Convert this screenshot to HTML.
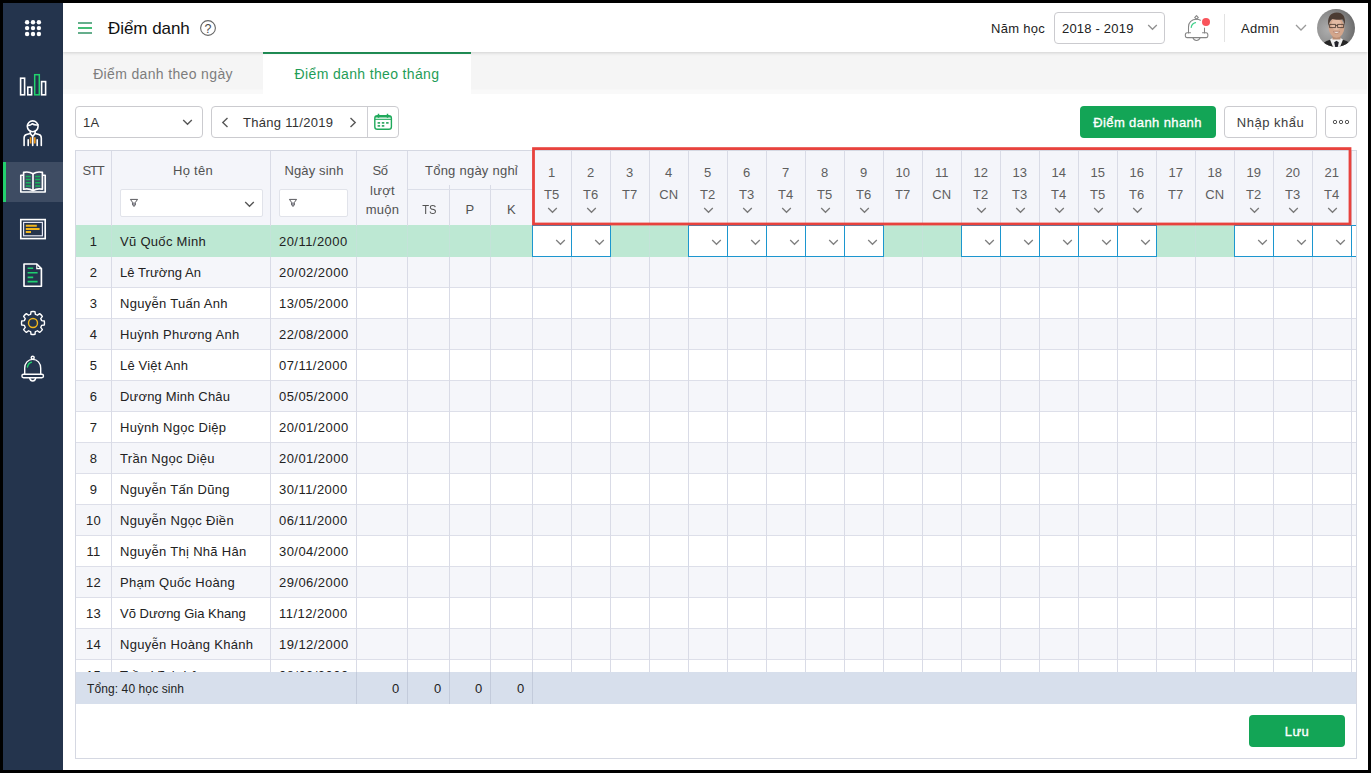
<!DOCTYPE html>
<html lang="vi">
<head>
<meta charset="utf-8">
<title>Điểm danh</title>
<style>
*{box-sizing:border-box;margin:0;padding:0}
html,body{width:1371px;height:773px;overflow:hidden;background:#000}
body{font-family:"Liberation Sans",sans-serif;font-size:13px;color:#222;position:relative}
.abs{position:absolute}
#bg{position:absolute;left:3px;top:3px;width:1365px;height:767px;background:#fff}
#side{position:absolute;left:3px;top:3px;width:60px;height:767px;background:#24344d}
#side .act{position:absolute;left:0;top:159px;width:60px;height:40px;background:#3e4c63}
#side .act i{position:absolute;left:0;top:0;width:3px;height:40px;background:#23d16e}
#side svg{position:absolute}
#head{position:absolute;left:63px;top:3px;width:1305px;height:49px;background:#fff;z-index:3;box-shadow:0 1px 3px rgba(0,0,0,.15)}
#tabs{position:absolute;left:63px;top:52px;width:1304px;height:42px;background:linear-gradient(#f5f5f5 0,#f5f5f5 37px,#f9f9f9 38px,#f9f9f9 42px)}
#tabs .t{position:absolute;top:0;height:42px;font-size:14px;line-height:45px;text-align:center;color:#7d7d7d;white-space:nowrap;letter-spacing:.35px}
#tabs .t.on{background:#fff;color:#1f9d57;border-top:2px solid #22955a;line-height:41px}
.tx{position:absolute;white-space:nowrap;line-height:16px}
.box{position:absolute;border:1px solid #cbcbcf;border-radius:4px;background:#fff}
.btn{position:absolute;border-radius:4px;text-align:center;white-space:nowrap}
.btn.g{background:#13a556;color:#fff;-webkit-text-stroke:.32px #fff}
.btn.w{background:#fff;border:1px solid #cbcbcf;color:#3c3c3c}
#grid{position:absolute;left:0;top:0;width:1356px;height:704px;overflow:hidden}
#ghead{position:absolute;left:76px;top:151px;width:1281px;height:75px;background:#f4f5fa;border-bottom:1px solid #dcdfe9}
.vl{position:absolute;width:1px;background:#d9dbe6}
.hl{position:absolute;height:1px;background:#dcdfe9}
.hc{position:absolute;text-align:center;color:#525252;white-space:nowrap;line-height:16px;letter-spacing:.3px}
.fbox{position:absolute;background:#fff;border:1px solid #e1e3ea;border-radius:2px}
.row{position:absolute;left:76px;width:1281px;height:31px;border-bottom:1px solid #dddfe9;letter-spacing:.3px}
.row.ev{background:#f5f6fa}
.row.sel{background:#bde8d3;height:32px;border-bottom:none;padding-top:1px}
.row.sel span{top:1px}
.row span{position:absolute;top:0;line-height:31px;white-space:nowrap}
.row .n{left:0;width:35px;text-align:center}
.row .nm{left:44px}
.row .d{left:203px;letter-spacing:.45px}
.cell{position:absolute;height:32px;background:#fff;border:1px solid #1c96cf}
#gfoot{position:absolute;left:76px;top:672px;width:1280px;height:32px;background:#d7dfec;letter-spacing:.3px}
#gfoot span{position:absolute;top:0;line-height:33px;white-space:nowrap}
#gfoot .z{text-align:right;padding-right:8.500px}
#gfoot .t{font-size:12px;letter-spacing:.1px;left:11px;top:1px}
#gfoot i{position:absolute;top:0;width:1px;height:32px;background:#c3cbdb}
#panel{position:absolute;left:75px;top:150px;width:1282px;height:609px;border:1px solid #d5d8e2;pointer-events:none}
#red{position:absolute;left:532px;top:147px;width:820px;height:79px;border:3px solid #e8413c}
.dn{letter-spacing:0;padding-left:.4px;color:#5e5e5e}
.vs{position:absolute;top:226px;width:1px;height:31px;background:#c4e3d9}
</style>
</head>
<body>
<div id="bg"></div>
<div id="side">
  <div class="act"><i></i></div>
</div>
<svg class="abs" style="left:3px;top:3px" width="60" height="400" viewBox="3 3 60 400">
<g fill="#fff"><circle cx="27.100" cy="22.200" r="2.200"/><circle cx="33" cy="22.200" r="2.200"/><circle cx="38.900" cy="22.200" r="2.200"/><circle cx="27.100" cy="28.100" r="2.200"/><circle cx="33" cy="28.100" r="2.200"/><circle cx="38.900" cy="28.100" r="2.200"/><circle cx="27.100" cy="34" r="2.200"/><circle cx="33" cy="34" r="2.200"/><circle cx="38.900" cy="34" r="2.200"/></g>
<!-- bar chart -->
<g fill="none" stroke="#fff" stroke-width="1.600"><rect x="20.600" y="78.200" width="4" height="16.600"/><rect x="27.800" y="87.200" width="3.800" height="7.600"/><rect x="41.600" y="81.600" width="4" height="13.200"/></g>
<rect x="34.700" y="74.700" width="4.600" height="20.100" fill="none" stroke="#23d16e" stroke-width="1.500"/>
<!-- person -->
<g fill="none" stroke="#fff" stroke-width="1.600" stroke-linejoin="round" stroke-linecap="round">
<circle cx="32.700" cy="126.300" r="5.400"/>
<path d="M27.600 125.200c2 .4 3.600-.2 4.600-1.400 1.600 1 3.600 1.400 5.800 1"/>
<path d="M30.300 131.200v2.200l-3.800 1.200c-1.600.5-2.400 1.800-2.400 3.400v7.400M35.100 131.200v2.200l3.800 1.200c1.600.5 2.400 1.800 2.400 3.400v7.400"/>
<path d="M30.300 133.400l2.400 3 2.400-3M28.200 145.400v-5.600M37.200 145.400v-5.600M32.700 136.400v9"/>
</g>
<path d="M30.600 137.200v6.400M34.800 137.200v6.400" stroke="#f39a1d" stroke-width="1.650" fill="none"/>
<!-- book -->
<g fill="none" stroke="#fff" stroke-width="1.650" stroke-linejoin="round">
<path d="M23.600 172.400c3.400-.8 6.600-.4 9.400 1.400 2.800-1.800 6-2.200 9.400-1.400v16.800c-3.400-.8-6.600-.4-9.400 1.400-2.800-1.800-6-2.200-9.400-1.400z"/>
<path d="M33 173.800v16.800"/>
<path d="M23.600 175.200h-2.800v16.800h24.400v-16.800h-2.800"/>
</g>
<g stroke="#17b35c" stroke-width="1.500" fill="none"><path d="M25.800 176.400h5M25.800 179.600h5M25.800 182.800h5M25.800 186h5M35.200 176.400h5M35.200 179.600h5M35.200 182.800h5M35.200 186h5"/></g>
<!-- monitor -->
<rect x="20.800" y="219.600" width="24.400" height="19" fill="none" stroke="#fff" stroke-width="1.650"/>
<rect x="23.600" y="222.400" width="18.800" height="13.400" fill="none" stroke="#e4e6f3" stroke-width="1.200"/>
<g stroke="#f2b71c" stroke-width="2" fill="none"><path d="M25.800 225.800h11M25.800 229h13.800M25.800 232h5.200"/></g>
<!-- document -->
<path d="M24 264h12.800l4.600 4.600v17.600H24z" fill="none" stroke="#fff" stroke-width="1.650" stroke-linejoin="round"/>
<path d="M36.800 264v4.600h4.600" fill="none" stroke="#fff" stroke-width="1.200"/>
<g stroke="#1fd071" stroke-width="1.600" fill="none"><path d="M27.600 268.200h5.600M27.600 272.800h10M27.600 277.400h5.600M27.600 281.600h10"/></g>
<!-- gear -->
<path id="gear" fill="none" stroke="#fff" stroke-width="1.400" stroke-linejoin="round" d="M30.63 314.42L31.05 311.67A11.5 11.5 0 0 1 34.95 311.67L35.37 314.42A8.9 8.9 0 0 1 37.39 315.26L39.64 313.61A11.5 11.5 0 0 1 42.39 316.36L40.74 318.61A8.9 8.9 0 0 1 41.58 320.63L44.33 321.05A11.5 11.5 0 0 1 44.33 324.95L41.58 325.37A8.9 8.9 0 0 1 40.74 327.39L42.39 329.64A11.5 11.5 0 0 1 39.64 332.39L37.39 330.74A8.9 8.9 0 0 1 35.37 331.58L34.95 334.33A11.5 11.5 0 0 1 31.05 334.33L30.63 331.58A8.9 8.9 0 0 1 28.61 330.74L26.36 332.39A11.5 11.5 0 0 1 23.61 329.64L25.26 327.39A8.9 8.9 0 0 1 24.42 325.37L21.67 324.95A11.5 11.5 0 0 1 21.67 321.05L24.42 320.63A8.9 8.9 0 0 1 25.26 318.61L23.61 316.36A11.5 11.5 0 0 1 26.36 313.61L28.61 315.26A8.9 8.9 0 0 1 30.63 314.42 Z"/>
<circle cx="33" cy="323" r="4.500" fill="none" stroke="#f2b71c" stroke-width="1.400"/>
<!-- bell -->
<g fill="none" stroke="#fff" stroke-width="1.400" stroke-linejoin="round" stroke-linecap="round">
<circle cx="32.700" cy="357.800" r="1.500"/>
<path d="M24.700 374.300v-6c0-5.300 3.300-8.900 8-8.900s8 3.600 8 8.900v6"/>
<rect x="21.900" y="374.300" width="21.600" height="3.500" rx="1.700"/>
<path d="M29.600 378c.5 2 1.600 3 3.100 3s2.600-1 3.100-3"/>
</g>
<path d="M27.400 367c.5-2.600 1.800-4.200 4-4.800" fill="none" stroke="#23d16e" stroke-width="1.400" stroke-linecap="round"/>
</svg>
<div id="head"></div>
<svg class="abs" style="left:78px;top:21px;z-index:4" width="14" height="14" viewBox="0 0 14 14"><rect x="0" y="1.100" width="14" height="1.800" fill="#55a680"/><rect x="0" y="6.100" width="14" height="1.800" fill="#2fb566"/><rect x="0" y="11.100" width="14" height="1.800" fill="#55a680"/></svg>
<div class="tx" style="left:108px;top:17px;font-size:17px;line-height:24px;color:#111;z-index:4;letter-spacing:-.05px">Điểm danh</div>
<svg class="abs" style="left:199px;top:19px;z-index:4" width="18" height="18" viewBox="0 0 18 18"><circle cx="9" cy="9" r="7.4" fill="none" stroke="#666" stroke-width="1.1"/><text x="9" y="13.500" text-anchor="middle" font-family="Liberation Sans, sans-serif" font-size="12.500" fill="#4a4a4a">?</text></svg>
<div class="tx" style="left:991px;top:21px;z-index:4;letter-spacing:.3px;color:#222">Năm học</div>
<div class="box" style="left:1054px;top:12px;width:111px;height:32px;z-index:4"></div>
<div class="tx" style="left:1062px;top:21px;z-index:5;letter-spacing:.2px;color:#222">2018 - 2019</div>
<svg class="abs" style="left:1146.500px;top:24px;z-index:5" width="11" height="7" viewBox="0 0 11 7"><path d="M1.200 1l4.300 4.300L9.800 1" fill="none" stroke="#909090" stroke-width="1.300"/></svg>
<svg class="abs" style="left:1180px;top:10px;z-index:5" width="34" height="34" viewBox="1180 10 34 34"><g fill="none" stroke="#858585" stroke-width="1.050" stroke-linejoin="round" stroke-linecap="round"><path d="M1188.500 32.800v-5.800c0-4.500 3.200-7.700 8-7.700 1.500 0 2.800.3 3.900.9M1204.500 28v4.800"/><path d="M1188.500 32.800h2M1204.500 32.800h-2"/><path d="M1188.500 32.800h-1.400c-1.100 0-1.800 1.100-1.800 2.400s.7 2.400 1.800 2.400h19c1.100 0 1.800-1.100 1.800-2.400s-.7-2.400-1.800-2.400h-1.600"/><path d="M1192.900 37.800c.7 1.800 2 2.700 3.600 2.700s2.900-.9 3.600-2.700"/><path d="M1194.700 17.700l1.800-2.100 1.800 2.100-1.800 1.500z"/></g><path d="M1191.200 27.400c.4-2.400 1.800-4 4.300-4.700" fill="none" stroke="#3fd08a" stroke-width="1.200" stroke-linecap="round"/><circle cx="1206" cy="22" r="4" fill="#f9545b"/></svg>
<div class="abs" style="left:1224px;top:14px;width:1px;height:28px;background:#e2e2e2;z-index:4"></div>
<div class="tx" style="left:1241px;top:21px;z-index:4;letter-spacing:.3px;color:#222">Admin</div>
<svg class="abs" style="left:1295px;top:24px;z-index:5" width="12" height="7" viewBox="0 0 12 7"><path d="M1 1l5 5 5-5" fill="none" stroke="#9a9a9a" stroke-width="1.3"/></svg>
<svg class="abs" style="left:1317px;top:9px;z-index:5" width="38" height="38" viewBox="0 0 38 38">
<defs><clipPath id="avc"><circle cx="19" cy="19" r="19"/></clipPath><radialGradient id="avg" cx="30%" cy="55%" r="80%"><stop offset="0" stop-color="#adadad"/><stop offset=".55" stop-color="#8c8c8c"/><stop offset="1" stop-color="#5f5f5f"/></radialGradient><filter id="avb" x="-10%" y="-10%" width="120%" height="120%"><feGaussianBlur stdDeviation=".55"/></filter></defs>
<g clip-path="url(#avc)"><rect width="38" height="38" fill="url(#avg)"/>
<g filter="url(#avb)">
<path d="M5 38c.5-4 3-5.800 7.500-7l4-1.500h6l4 1.500c4.500 1.200 7 3 7.500 7z" fill="#262626"/>
<path d="M13 30.500l3.500-2h6l3.500 2-3 7.500h-7z" fill="#f0f0f0"/>
<path d="M17.200 33.200l2.300-1.400 2.300 1.400-1 4.800h-2.600z" fill="#20242a"/>
<rect x="15.500" y="24" width="8" height="6.500" fill="#b98c72"/>
<ellipse cx="19.500" cy="18.600" rx="7.900" ry="10.200" fill="#d3a68c"/><ellipse cx="19.300" cy="15.500" rx="5" ry="5.500" fill="#e3bba4"/>
<path d="M11.400 17c-1.400-8.600 1.800-13.400 8.400-13.400 6.400 0 9.200 4.600 8 13-.4-3.200-1.100-5-2.400-6.400-3 .9-7.400.7-10 -.1-2 1.200-3.200 3.400-4 6.900z" fill="#4b3b32"/>
<path d="M12.600 15.400h6v3.200h-6zM20.600 15.400h6v3.200h-6zM18.600 16.400h2" fill="none" stroke="#3a2d27" stroke-width=".750"/>
<path d="M16.200 22.600c2 2.300 4.600 2.300 6.600 0z" fill="#fbf6f2" stroke="#9c6450" stroke-width=".5"/>
</g></g></svg>
<div id="tabs">
  <div class="t" style="left:0;width:200px">Điểm danh theo ngày</div>
  <div class="t on" style="left:200px;width:208px">Điểm danh theo tháng</div>
</div>
<div class="box" style="left:75px;top:106px;width:128px;height:32px"></div>
<div class="tx" style="left:83px;top:115px;letter-spacing:.3px;color:#333">1A</div>
<svg class="abs" style="left:181.500px;top:119px" width="11" height="7" viewBox="0 0 11 7"><path d="M1.200 1l4.300 4.300L9.800 1" fill="none" stroke="#585858" stroke-width="1.400"/></svg>
<div class="box" style="left:211px;top:106px;width:188px;height:32px"></div>
<div class="abs" style="left:367px;top:107px;width:1px;height:30px;background:#cfcfd4"></div>
<svg class="abs" style="left:221px;top:117px" width="8" height="11" viewBox="0 0 8 11"><path d="M6.500 1L1.800 5.500 6.500 10" fill="none" stroke="#585858" stroke-width="1.400"/></svg>
<div class="tx" style="left:243px;top:115px;letter-spacing:.3px;color:#333">Tháng 11/2019</div>
<svg class="abs" style="left:349px;top:117px" width="8" height="11" viewBox="0 0 8 11"><path d="M1.500 1L6.200 5.500 1.500 10" fill="none" stroke="#585858" stroke-width="1.400"/></svg>
<svg class="abs" style="left:373px;top:113px" width="20" height="18" viewBox="0 0 20 18"><g fill="none" stroke="#1fa95b" stroke-width="1.400"><rect x="1.800" y="2.700" width="16.600" height="13.600" rx="2.600"/><path d="M1.800 6.300h16.600" stroke-width="1.100"/><path d="M5.500 .8v4M14.500 .8v4" stroke-width="1.500"/></g><path d="M2.400 4.400c0-.9.800-1.500 1.800-1.500h11.800c1 0 1.800.6 1.800 1.500z" fill="#1fa95b"/><g fill="#23a25a"><rect x="4.600" y="9.100" width="2.500" height="1.600"/><rect x="8.800" y="9.100" width="2.500" height="1.600"/><rect x="13.100" y="9.100" width="2.500" height="1.600"/><rect x="4.600" y="12.100" width="2.500" height="1.600"/><rect x="8.800" y="12.100" width="2.500" height="1.600"/></g></svg>
<div class="btn g" style="left:1080px;top:106px;width:136px;height:32px;line-height:33px;letter-spacing:.4px;padding-right:1px">Điểm danh nhanh</div>
<div class="btn w" style="left:1224px;top:106px;width:93px;height:32px;line-height:32px;letter-spacing:.5px;padding-right:0">Nhập khẩu</div>
<div class="btn w" style="left:1325px;top:106px;width:32px;height:32px"><svg class="abs" style="left:6px;top:12px" width="18" height="6" viewBox="0 0 18 6"><g fill="none" stroke="#555" stroke-width="1"><circle cx="3" cy="3" r="1.700"/><circle cx="9" cy="3" r="1.700"/><circle cx="15" cy="3" r="1.700"/></g></svg></div>
<div id="grid">
<div id="ghead"></div>
<div class="row sel" style="top:225px"><span class="n">1</span><span class="nm">Vũ Quốc Minh</span><span class="d">20/11/2000</span></div>
<div class="row ev" style="top:257px"><span class="n">2</span><span class="nm" style="letter-spacing:0.08px">Lê Trường An</span><span class="d">20/02/2000</span></div>
<div class="row" style="top:288px"><span class="n">3</span><span class="nm">Nguyễn Tuấn Anh</span><span class="d">13/05/2000</span></div>
<div class="row ev" style="top:319px"><span class="n">4</span><span class="nm">Huỳnh Phương Anh</span><span class="d">22/08/2000</span></div>
<div class="row" style="top:350px"><span class="n">5</span><span class="nm" style="letter-spacing:0.17px">Lê Việt Anh</span><span class="d">07/11/2000</span></div>
<div class="row ev" style="top:381px"><span class="n">6</span><span class="nm" style="letter-spacing:0.17px">Dương Minh Châu</span><span class="d">05/05/2000</span></div>
<div class="row" style="top:412px"><span class="n">7</span><span class="nm">Huỳnh Ngọc Diệp</span><span class="d">20/01/2000</span></div>
<div class="row ev" style="top:443px"><span class="n">8</span><span class="nm">Trần Ngọc Diệu</span><span class="d">20/01/2000</span></div>
<div class="row" style="top:474px"><span class="n">9</span><span class="nm">Nguyễn Tấn Dũng</span><span class="d">30/11/2000</span></div>
<div class="row ev" style="top:505px"><span class="n">10</span><span class="nm">Nguyễn Ngọc Điền</span><span class="d">06/11/2000</span></div>
<div class="row" style="top:536px"><span class="n">11</span><span class="nm">Nguyễn Thị Nhã Hân</span><span class="d">30/04/2000</span></div>
<div class="row ev" style="top:567px"><span class="n">12</span><span class="nm">Phạm Quốc Hoàng</span><span class="d">29/06/2000</span></div>
<div class="row" style="top:598px"><span class="n">13</span><span class="nm" style="letter-spacing:0px">Võ Dương Gia Khang</span><span class="d">11/12/2000</span></div>
<div class="row ev" style="top:629px"><span class="n">14</span><span class="nm">Nguyễn Hoàng Khánh</span><span class="d">19/12/2000</span></div>
<div class="row" style="top:660px"><span class="n">15</span><span class="nm">Trần Vĩnh Lộc</span><span class="d">08/03/2000</span></div>
<div class="vl" style="left:111px;top:150px;height:554px"></div>
<div class="vl" style="left:270px;top:150px;height:554px"></div>
<div class="vl" style="left:356px;top:150px;height:554px"></div>
<div class="vl" style="left:407px;top:150px;height:554px"></div>
<div class="vl" style="left:449px;top:185px;height:519px"></div>
<div class="vl" style="left:490px;top:185px;height:519px"></div>
<div class="vl" style="left:532px;top:150px;height:554px"></div>
<div class="vl" style="left:571px;top:150px;height:554px"></div>
<div class="vl" style="left:610px;top:150px;height:554px"></div>
<div class="vl" style="left:649px;top:150px;height:554px"></div>
<div class="vl" style="left:688px;top:150px;height:554px"></div>
<div class="vl" style="left:727px;top:150px;height:554px"></div>
<div class="vl" style="left:766px;top:150px;height:554px"></div>
<div class="vl" style="left:805px;top:150px;height:554px"></div>
<div class="vl" style="left:844px;top:150px;height:554px"></div>
<div class="vl" style="left:883px;top:150px;height:554px"></div>
<div class="vl" style="left:922px;top:150px;height:554px"></div>
<div class="vl" style="left:961px;top:150px;height:554px"></div>
<div class="vl" style="left:1000px;top:150px;height:554px"></div>
<div class="vl" style="left:1039px;top:150px;height:554px"></div>
<div class="vl" style="left:1078px;top:150px;height:554px"></div>
<div class="vl" style="left:1117px;top:150px;height:554px"></div>
<div class="vl" style="left:1156px;top:150px;height:554px"></div>
<div class="vl" style="left:1195px;top:150px;height:554px"></div>
<div class="vl" style="left:1234px;top:150px;height:554px"></div>
<div class="vl" style="left:1273px;top:150px;height:554px"></div>
<div class="vl" style="left:1312px;top:150px;height:554px"></div>
<div class="vl" style="left:1351px;top:150px;height:554px"></div>
<div class="vl" style="left:1390px;top:150px;height:554px"></div>
<div class="vs" style="left:111px"></div><div class="vs" style="left:270px"></div><div class="vs" style="left:356px"></div><div class="vs" style="left:407px"></div><div class="vs" style="left:449px"></div><div class="vs" style="left:490px"></div><div class="vs" style="left:532px"></div><div class="vs" style="left:571px"></div><div class="vs" style="left:610px"></div><div class="vs" style="left:649px"></div><div class="vs" style="left:688px"></div><div class="vs" style="left:727px"></div><div class="vs" style="left:766px"></div><div class="vs" style="left:805px"></div><div class="vs" style="left:844px"></div><div class="vs" style="left:883px"></div><div class="vs" style="left:922px"></div><div class="vs" style="left:961px"></div><div class="vs" style="left:1000px"></div><div class="vs" style="left:1039px"></div><div class="vs" style="left:1078px"></div><div class="vs" style="left:1117px"></div><div class="vs" style="left:1156px"></div><div class="vs" style="left:1195px"></div><div class="vs" style="left:1234px"></div><div class="vs" style="left:1273px"></div><div class="vs" style="left:1312px"></div><div class="vs" style="left:1351px"></div><div class="vs" style="left:1390px"></div>
<div class="hl" style="left:408px;top:189px;width:124px"></div>
<div class="hc" style="left:75px;top:163px;width:36px;letter-spacing:-1.2px">STT</div>
<div class="hc" style="left:114px;top:163px;width:158px">Họ tên</div>
<div class="hc" style="left:272px;top:163px;width:84px;letter-spacing:.15px">Ngày sinh</div>
<div class="hc" style="left:357px;top:161px;width:51px;line-height:19.500px"><span style="position:relative;left:-2.500px;letter-spacing:-.5px">Số</span><br>lượt<br>muộn</div>
<div class="hc" style="left:409.500px;top:163px;width:124px;letter-spacing:.24px">Tổng ngày nghỉ</div>
<div class="hc" style="left:409px;top:202px;width:41px;letter-spacing:0"><span style="display:inline-block;transform:scaleX(.86)">TS</span></div>
<div class="hc" style="left:450px;top:202px;width:40px">P</div>
<div class="hc" style="left:491px;top:202px;width:41px">K</div>
<div class="fbox" style="left:120px;top:189px;width:143px;height:28px"><svg class="abs" style="left:8px;top:8px" width="11" height="10" viewBox="0 0 11 10"><path d="M2.600 4.400h3.800v2.700L5 8.400 3.600 7.100z" fill="#a3a3ae"/><path d="M1.400 1.400h7.200L6.300 4.500v2.700L5 8.400 3.700 7.200V4.500z" fill="none" stroke="#5a5a5e" stroke-width="1" stroke-linejoin="round"/></svg><svg class="abs" style="left:123px;top:11px" width="11" height="7" viewBox="0 0 11 7"><path d="M1.200 1l4.300 4.300L9.800 1" fill="none" stroke="#555" stroke-width="1.350"/></svg></div>
<div class="fbox" style="left:279px;top:189px;width:69px;height:28px"><svg class="abs" style="left:8px;top:8px" width="11" height="10" viewBox="0 0 11 10"><path d="M2.600 4.400h3.800v2.700L5 8.400 3.600 7.100z" fill="#a3a3ae"/><path d="M1.400 1.400h7.200L6.300 4.500v2.700L5 8.400 3.700 7.200V4.500z" fill="none" stroke="#5a5a5e" stroke-width="1" stroke-linejoin="round"/></svg></div>
<div class="hc dn" style="left:532px;top:165px;width:39px">1</div><div class="hc dn" style="left:532px;top:187px;width:39px">T5</div><svg class="abs" style="left:546.5px;top:207px" width="11" height="7" viewBox="0 0 11 7"><path d="M1.2 1l4.300 4.300L9.800 1" fill="none" stroke="#787878" stroke-width="1.250"/></svg><div class="cell" style="left:532px;top:225px;width:40px"><svg class="abs" style="left:22px;top:13px" width="11" height="7" viewBox="0 0 11 7"><path d="M1.200 1l4.300 4.300L9.800 1" fill="none" stroke="#808080" stroke-width="1.300"/></svg></div>
<div class="hc dn" style="left:571px;top:165px;width:39px">2</div><div class="hc dn" style="left:571px;top:187px;width:39px">T6</div><svg class="abs" style="left:585.5px;top:207px" width="11" height="7" viewBox="0 0 11 7"><path d="M1.2 1l4.300 4.300L9.800 1" fill="none" stroke="#787878" stroke-width="1.250"/></svg><div class="cell" style="left:571px;top:225px;width:40px"><svg class="abs" style="left:22px;top:13px" width="11" height="7" viewBox="0 0 11 7"><path d="M1.200 1l4.300 4.300L9.800 1" fill="none" stroke="#808080" stroke-width="1.300"/></svg></div>
<div class="hc dn" style="left:610px;top:165px;width:39px">3</div><div class="hc dn" style="left:610px;top:187px;width:39px">T7</div>
<div class="hc dn" style="left:649px;top:165px;width:39px">4</div><div class="hc dn" style="left:649px;top:187px;width:39px">CN</div>
<div class="hc dn" style="left:688px;top:165px;width:39px">5</div><div class="hc dn" style="left:688px;top:187px;width:39px">T2</div><svg class="abs" style="left:702.5px;top:207px" width="11" height="7" viewBox="0 0 11 7"><path d="M1.2 1l4.300 4.300L9.800 1" fill="none" stroke="#787878" stroke-width="1.250"/></svg><div class="cell" style="left:688px;top:225px;width:40px"><svg class="abs" style="left:22px;top:13px" width="11" height="7" viewBox="0 0 11 7"><path d="M1.200 1l4.300 4.300L9.800 1" fill="none" stroke="#808080" stroke-width="1.300"/></svg></div>
<div class="hc dn" style="left:727px;top:165px;width:39px">6</div><div class="hc dn" style="left:727px;top:187px;width:39px">T3</div><svg class="abs" style="left:741.5px;top:207px" width="11" height="7" viewBox="0 0 11 7"><path d="M1.2 1l4.300 4.300L9.800 1" fill="none" stroke="#787878" stroke-width="1.250"/></svg><div class="cell" style="left:727px;top:225px;width:40px"><svg class="abs" style="left:22px;top:13px" width="11" height="7" viewBox="0 0 11 7"><path d="M1.200 1l4.300 4.300L9.800 1" fill="none" stroke="#808080" stroke-width="1.300"/></svg></div>
<div class="hc dn" style="left:766px;top:165px;width:39px">7</div><div class="hc dn" style="left:766px;top:187px;width:39px">T4</div><svg class="abs" style="left:780.5px;top:207px" width="11" height="7" viewBox="0 0 11 7"><path d="M1.2 1l4.300 4.300L9.800 1" fill="none" stroke="#787878" stroke-width="1.250"/></svg><div class="cell" style="left:766px;top:225px;width:40px"><svg class="abs" style="left:22px;top:13px" width="11" height="7" viewBox="0 0 11 7"><path d="M1.200 1l4.300 4.300L9.800 1" fill="none" stroke="#808080" stroke-width="1.300"/></svg></div>
<div class="hc dn" style="left:805px;top:165px;width:39px">8</div><div class="hc dn" style="left:805px;top:187px;width:39px">T5</div><svg class="abs" style="left:819.5px;top:207px" width="11" height="7" viewBox="0 0 11 7"><path d="M1.2 1l4.300 4.300L9.800 1" fill="none" stroke="#787878" stroke-width="1.250"/></svg><div class="cell" style="left:805px;top:225px;width:40px"><svg class="abs" style="left:22px;top:13px" width="11" height="7" viewBox="0 0 11 7"><path d="M1.200 1l4.300 4.300L9.800 1" fill="none" stroke="#808080" stroke-width="1.300"/></svg></div>
<div class="hc dn" style="left:844px;top:165px;width:39px">9</div><div class="hc dn" style="left:844px;top:187px;width:39px">T6</div><svg class="abs" style="left:858.5px;top:207px" width="11" height="7" viewBox="0 0 11 7"><path d="M1.2 1l4.300 4.300L9.800 1" fill="none" stroke="#787878" stroke-width="1.250"/></svg><div class="cell" style="left:844px;top:225px;width:40px"><svg class="abs" style="left:22px;top:13px" width="11" height="7" viewBox="0 0 11 7"><path d="M1.200 1l4.300 4.300L9.800 1" fill="none" stroke="#808080" stroke-width="1.300"/></svg></div>
<div class="hc dn" style="left:883px;top:165px;width:39px">10</div><div class="hc dn" style="left:883px;top:187px;width:39px">T7</div>
<div class="hc dn" style="left:922px;top:165px;width:39px">11</div><div class="hc dn" style="left:922px;top:187px;width:39px">CN</div>
<div class="hc dn" style="left:961px;top:165px;width:39px">12</div><div class="hc dn" style="left:961px;top:187px;width:39px">T2</div><svg class="abs" style="left:975.5px;top:207px" width="11" height="7" viewBox="0 0 11 7"><path d="M1.2 1l4.300 4.300L9.800 1" fill="none" stroke="#787878" stroke-width="1.250"/></svg><div class="cell" style="left:961px;top:225px;width:40px"><svg class="abs" style="left:22px;top:13px" width="11" height="7" viewBox="0 0 11 7"><path d="M1.200 1l4.300 4.300L9.800 1" fill="none" stroke="#808080" stroke-width="1.300"/></svg></div>
<div class="hc dn" style="left:1000px;top:165px;width:39px">13</div><div class="hc dn" style="left:1000px;top:187px;width:39px">T3</div><svg class="abs" style="left:1014.5px;top:207px" width="11" height="7" viewBox="0 0 11 7"><path d="M1.2 1l4.300 4.300L9.800 1" fill="none" stroke="#787878" stroke-width="1.250"/></svg><div class="cell" style="left:1000px;top:225px;width:40px"><svg class="abs" style="left:22px;top:13px" width="11" height="7" viewBox="0 0 11 7"><path d="M1.200 1l4.300 4.300L9.800 1" fill="none" stroke="#808080" stroke-width="1.300"/></svg></div>
<div class="hc dn" style="left:1039px;top:165px;width:39px">14</div><div class="hc dn" style="left:1039px;top:187px;width:39px">T4</div><svg class="abs" style="left:1053.5px;top:207px" width="11" height="7" viewBox="0 0 11 7"><path d="M1.2 1l4.300 4.300L9.800 1" fill="none" stroke="#787878" stroke-width="1.250"/></svg><div class="cell" style="left:1039px;top:225px;width:40px"><svg class="abs" style="left:22px;top:13px" width="11" height="7" viewBox="0 0 11 7"><path d="M1.200 1l4.300 4.300L9.800 1" fill="none" stroke="#808080" stroke-width="1.300"/></svg></div>
<div class="hc dn" style="left:1078px;top:165px;width:39px">15</div><div class="hc dn" style="left:1078px;top:187px;width:39px">T5</div><svg class="abs" style="left:1092.5px;top:207px" width="11" height="7" viewBox="0 0 11 7"><path d="M1.2 1l4.300 4.300L9.800 1" fill="none" stroke="#787878" stroke-width="1.250"/></svg><div class="cell" style="left:1078px;top:225px;width:40px"><svg class="abs" style="left:22px;top:13px" width="11" height="7" viewBox="0 0 11 7"><path d="M1.200 1l4.300 4.300L9.800 1" fill="none" stroke="#808080" stroke-width="1.300"/></svg></div>
<div class="hc dn" style="left:1117px;top:165px;width:39px">16</div><div class="hc dn" style="left:1117px;top:187px;width:39px">T6</div><svg class="abs" style="left:1131.5px;top:207px" width="11" height="7" viewBox="0 0 11 7"><path d="M1.2 1l4.300 4.300L9.800 1" fill="none" stroke="#787878" stroke-width="1.250"/></svg><div class="cell" style="left:1117px;top:225px;width:40px"><svg class="abs" style="left:22px;top:13px" width="11" height="7" viewBox="0 0 11 7"><path d="M1.200 1l4.300 4.300L9.800 1" fill="none" stroke="#808080" stroke-width="1.300"/></svg></div>
<div class="hc dn" style="left:1156px;top:165px;width:39px">17</div><div class="hc dn" style="left:1156px;top:187px;width:39px">T7</div>
<div class="hc dn" style="left:1195px;top:165px;width:39px">18</div><div class="hc dn" style="left:1195px;top:187px;width:39px">CN</div>
<div class="hc dn" style="left:1234px;top:165px;width:39px">19</div><div class="hc dn" style="left:1234px;top:187px;width:39px">T2</div><svg class="abs" style="left:1248.5px;top:207px" width="11" height="7" viewBox="0 0 11 7"><path d="M1.2 1l4.300 4.300L9.800 1" fill="none" stroke="#787878" stroke-width="1.250"/></svg><div class="cell" style="left:1234px;top:225px;width:40px"><svg class="abs" style="left:22px;top:13px" width="11" height="7" viewBox="0 0 11 7"><path d="M1.200 1l4.300 4.300L9.800 1" fill="none" stroke="#808080" stroke-width="1.300"/></svg></div>
<div class="hc dn" style="left:1273px;top:165px;width:39px">20</div><div class="hc dn" style="left:1273px;top:187px;width:39px">T3</div><svg class="abs" style="left:1287.5px;top:207px" width="11" height="7" viewBox="0 0 11 7"><path d="M1.2 1l4.300 4.300L9.800 1" fill="none" stroke="#787878" stroke-width="1.250"/></svg><div class="cell" style="left:1273px;top:225px;width:40px"><svg class="abs" style="left:22px;top:13px" width="11" height="7" viewBox="0 0 11 7"><path d="M1.200 1l4.300 4.300L9.800 1" fill="none" stroke="#808080" stroke-width="1.300"/></svg></div>
<div class="hc dn" style="left:1312px;top:165px;width:39px">21</div><div class="hc dn" style="left:1312px;top:187px;width:39px">T4</div><svg class="abs" style="left:1326.5px;top:207px" width="11" height="7" viewBox="0 0 11 7"><path d="M1.2 1l4.300 4.300L9.800 1" fill="none" stroke="#787878" stroke-width="1.250"/></svg><div class="cell" style="left:1312px;top:225px;width:40px"><svg class="abs" style="left:22px;top:13px" width="11" height="7" viewBox="0 0 11 7"><path d="M1.200 1l4.300 4.300L9.800 1" fill="none" stroke="#808080" stroke-width="1.300"/></svg></div>
<div class="cell" style="left:1351px;top:225px;width:40px"></div>
</div>
<div id="gfoot"><span class="t">Tổng: 40 học sinh</span><span class="z" style="left:281px;width:51px">0</span><span class="z" style="left:332px;width:42px">0</span><span class="z" style="left:374px;width:41px">0</span><span class="z" style="left:415px;width:42px">0</span><i style="left:280px"></i><i style="left:331px"></i><i style="left:373px"></i><i style="left:414px"></i><i style="left:456px"></i></div>
<div id="panel"></div>
<svg class="abs" style="left:528px;top:144px" width="830" height="86" viewBox="528 144 830 86"><rect x="533.500" y="148.600" width="816.500" height="75.400" fill="none" stroke="#e8423d" stroke-width="2.800"/></svg>
<div class="btn g" style="left:1249px;top:715px;width:96px;height:32px;line-height:33px;letter-spacing:.5px">Lưu</div>
</body>
</html>
